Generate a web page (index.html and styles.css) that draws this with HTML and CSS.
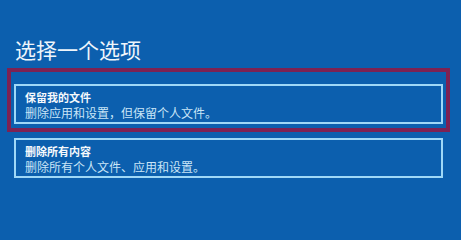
FILE: index.html
```html
<!DOCTYPE html>
<html lang="zh-CN">
<head>
<meta charset="utf-8">
<title>选择一个选项</title>
<link rel="stylesheet" href="styles.css">
</head>
<body>
<main class="page">
  <h1 class="title">选择一个选项</h1>
  <div class="highlight">
    <div class="option">
      <div class="option-name">保留我的文件</div>
      <div class="option-desc">删除应用和设置，但保留个人文件。</div>
    </div>
  </div>
  <div class="option option-plain">
    <div class="option-name">删除所有内容</div>
    <div class="option-desc">删除所有个人文件、应用和设置。</div>
  </div>
</main>
</body>
</html>
```
FILE: styles.css
```css
html, body {
  margin: 0;
  padding: 0;
}
body {
  width: 461px;
  height: 225px;
  overflow: hidden;
  background: #0c5fae;
  font-family: "Noto Sans CJK SC", "Noto Sans", sans-serif;
  color: #f2f7fb;
}
.page {
  display: flex;
  flex-direction: column;
  padding: 37px 0 0 7px;
  width: 443px;
}
.title {
  margin: 0 0 7px 8px;
  font-size: 21px;
  line-height: 24px;
  font-weight: 400;
  color: #eef5fb;
  letter-spacing: 0;
}
.highlight {
  border: 4px solid #7d2253;
  padding: 12px 3px 4px 3px;
}
.option {
  border: 2px solid #9fd8f7;
  height: 32px;
  padding: 4px 9px 0 9px;
  box-sizing: content-box;
}
.option-plain {
  margin: 6px 0 0 7px;
  width: 407px;
}
.option-name {
  font-size: 11px;
  line-height: 15px;
  font-weight: 700;
  color: #f6f9fc;
}
.option-desc {
  font-size: 12px;
  line-height: 15px;
  color: #c9e5f7;
}
```
